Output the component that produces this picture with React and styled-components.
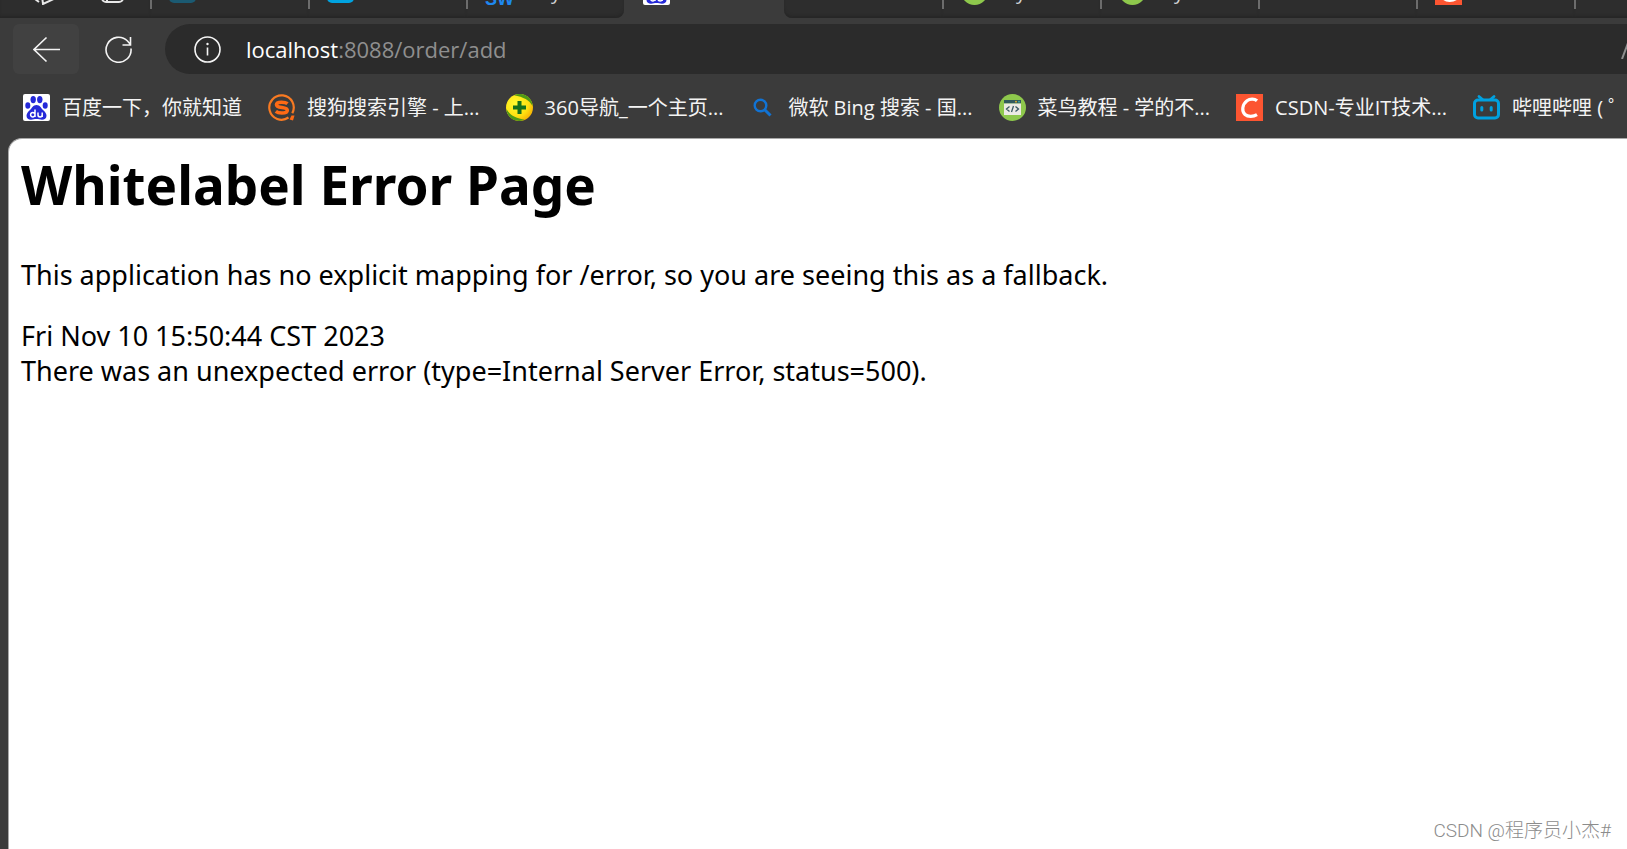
import React from 'react';
import styled, {createGlobalStyle, css} from 'styled-components';

const GlobalStyle = createGlobalStyle`
    * {
        box-sizing: border-box;
    }

    body {
        margin: 0;
        background: #3b3b3b;
        font-family: "Open Sans", "Noto Sans CJK SC", sans-serif;
    }
`;

const Browser = styled.div`
    display: flex;
    flex-direction: column;
    height: 100vh;
    overflow: hidden;
`;

const TabStrip = styled.nav`
    display: flex;
    align-items: flex-end;
    flex: none;
    height: 18px;
    overflow: hidden;
    background: #3b3b3b;
`;

const darkTab = css`
    background: #2d2d2d;
    box-shadow: inset 0 -3px 3px -1px #262626;
`;

const TabActions = styled.div`
    display: flex;
    align-items: center;
    flex: none;
    gap: 40px;
    width: 150px;
    height: 53px;
    padding-left: 34px;
    ${darkTab}
`;

const IconButton = styled.button`
    display: flex;
    padding: 0;
    border: 0;
    background: none;
    color: #e8e8e8;
`;

const Tab = styled.a`
    display: flex;
    align-items: center;
    flex: none;
    gap: 10px;
    width: ${({$active}) => ($active ? '160px' : '158px')};
    height: 53px;
    color: #d0d0d0;
    font-size: 20px;
    line-height: 28px;
    text-decoration: none;
    ${({$active}) => !$active && darkTab}
    border-radius: ${({$round}) => $round || '0'};

    &::before {
        content: "";
        width: 2px;
        height: 34px;
        margin-right: 7px;
        background: ${({$line}) => ($line ? '#6c6c6c' : 'transparent')};
    }
`;

const SwMark = styled.span`
    align-self: flex-end;
    width: 38px;
    margin-bottom: 9px;
    color: #1e88f0;
    font-family: "Liberation Sans Narrow", "Liberation Sans", sans-serif;
    font-size: 18px;
    font-weight: 700;
    line-height: 20px;
`;

const Toolbar = styled.header`
    display: flex;
    align-items: center;
    flex: none;
    height: 62px;
    padding-left: 13px;
`;

const NavButton = styled.button`
    display: flex;
    align-items: center;
    justify-content: center;
    width: 66px;
    height: 50px;
    margin-right: 6px;
    padding: 0;
    border: 0;
    border-radius: 6px;
    background: ${({$raised}) => ($raised ? '#414141' : 'none')};
    color: #f4f4f4;
`;

const AddressBar = styled.div`
    display: flex;
    align-items: center;
    flex: 1;
    gap: 25px;
    height: 50px;
    margin-left: 8px;
    padding-left: 29px;
    border-radius: 25px 0 0 25px;
    background: #2b2b2b;
    color: #f4f4f4;
    overflow: hidden;
`;

const Address = styled.a`
    flex: 1;
    color: #8f8f8f;
    font-size: 22px;
    text-decoration: none;

    b {
        color: #ffffff;
        font-weight: 400;
    }
`;

const Bookmarks = styled.nav`
    display: flex;
    align-items: center;
    flex: none;
    gap: 26px;
    height: 58px;
    padding: 0 0 3px 23px;
    overflow: hidden;
`;

const Bookmark = styled.a`
    display: flex;
    align-items: center;
    flex: none;
    gap: 12px;
    color: #f4f4f4;
    font-size: 20px;
    line-height: 28px;
    text-decoration: none;
    white-space: nowrap;
`;

const Page = styled.main`
    display: flex;
    flex-direction: column;
    flex: 1;
    margin-left: 8px;
    padding: 11px 12px 0;
    border: 1px solid #a8a8a8;
    border-width: 1px 0 0 1px;
    border-radius: 14px 0 0 0;
    background: #ffffff;
    color: #000000;
    font-family: "Noto Sans", sans-serif;
    font-size: 27px;
    line-height: 35px;
`;

const Title = styled.h1`
    margin: 0 0 37px;
    font-size: 53px;
    line-height: 70px;
`;

const Message = styled.p`
    margin: 0 0 26px;
`;

const Watermark = styled.footer`
    margin-top: auto;
    padding: 0 4px 5px;
    color: #8c8c8c;
    font-family: Roboto, "Noto Sans CJK SC", sans-serif;
    font-size: 19px;
    font-weight: 300;
    line-height: 26px;
    text-align: right;
`;

const Svg = ({children}) => (
    <svg width="27" height="27" viewBox="0 0 27 27" fill="none" aria-hidden="true">{children}</svg>
);

const BaiduIcon = () => (
    <Svg>
        <rect width="27" height="27" rx="2" fill="#fff"/>
        <g fill="#2529d8">
            <ellipse cx="4.8" cy="11.5" rx="2.5" ry="3.3"/>
            <ellipse cx="10.2" cy="5.6" rx="2.7" ry="3.6"/>
            <ellipse cx="16.8" cy="5.6" rx="2.7" ry="3.6"/>
            <ellipse cx="22.2" cy="11.5" rx="2.5" ry="3.3"/>
            <path d="M13.5 11c-3.500 0-4.500 3-6.500 5-2 1.800-3.500 3.500-3.500 5.800 0 2.600 2 4 4.500 4 2 0 3.500-.7 5.500-.7s3.500.7 5.500.7c2.500 0 4.500-1.400 4.500-4 0-2.300-1.500-4-3.500-5.800-2-2-3-5-6.500-5z"/>
        </g>
        <path d="M12 15.500v7.500M12 20.700a2.200 2.200 0 1 1-4.400 0a2.200 2.200 0 1 1 4.400 0M15 18.500v2.500c0 2.500 4.200 2.500 4.200 0v-2.500M19.200 18.500v4.500" stroke="#fff" strokeWidth="1.500"/>
    </Svg>
);

const SogouIcon = () => (
    <Svg>
        <path d="M20.500 23.500a12.200 12.200 0 1 1 3.800-4.300" stroke="#f87a22" strokeWidth="2.200"/>
        <path d="M19.500 9.600c-1.500-1.200-3.500-1.400-6-1.400-3 0-5 .8-5 2.500 0 4 10.800 1.500 10.800 5.500 0 2-2.500 2.800-5.500 2.800-2.500 0-4.500-.4-6-1.600" stroke="#ff6a14" strokeWidth="3.600"/>
        <path d="M23.500 21.500l3 0-1.500 5-3.500-1z" fill="#ff6a14"/>
    </Svg>
);

const NavIcon = () => (
    <Svg>
        <defs>
            <radialGradient id="ball" cx=".35" cy=".35" r=".8">
                <stop offset="0" stopColor="#fffb30"/>
                <stop offset=".6" stopColor="#ffe010"/>
                <stop offset="1" stopColor="#f2a200"/>
            </radialGradient>
        </defs>
        <circle cx="13.500" cy="13.500" r="13.500" fill="url(#ball)"/>
        <path d="M8 1.200C14-1.200 22 0 25.500 7.500c.8 1.800 1 3 1 4.500-3-6-9-9-18.500-10.800z" fill="#4f9a16"/>
        <path d="M19 25.800C13 28.200 5 27 1.500 19.500c-.8-1.800-1-3-1-4.500 3 6 9 9 18.500 10.800z" fill="#4f9a16"/>
        <path d="M13.500 7v13M7 13.500h13" stroke="#15701b" strokeWidth="4"/>
    </Svg>
);

const BingIcon = () => (
    <Svg>
        <circle cx="11.500" cy="11.500" r="5.800" stroke="#1173d4" strokeWidth="2.400"/>
        <path d="M15.500 15.500l6 6" stroke="#1173d4" strokeWidth="3"/>
    </Svg>
);

const RunoobIcon = () => (
    <Svg>
        <circle cx="13.500" cy="13.500" r="13.500" fill="#8ec84c"/>
        <path d="M5 6h17v3.500H5z" fill="#31595c"/>
        <path d="M5 9.500h17v11.500H5z" fill="#eceae4"/>
        <path d="M10.500 12.500l-3 2.500 3 2.500M16.500 12.500l3 2.500-3 2.500M14.500 12l-2 6" stroke="#3c5a64" strokeWidth="1.300"/>
        <circle cx="17" cy="7.700" r=".9" fill="#f0b429"/>
        <circle cx="20" cy="7.700" r=".9" fill="#3fb0a8"/>
    </Svg>
);

const CsdnIcon = () => (
    <Svg>
        <rect width="27" height="27" fill="#fc5531"/>
        <path d="M21 6.800c-2.500-2.200-7-2.300-10 0-5 3.800-5.500 10.500-2 13.700 3 2.700 8.500 2.300 12 .2" stroke="#fff" strokeWidth="3.200"/>
    </Svg>
);

const BiliIcon = () => (
    <Svg>
        <rect x="1.500" y="6" width="24" height="18" rx="3.500" stroke="#00a1e0" strokeWidth="3"/>
        <path d="M6 2.500l3.500 3M21 2.500l-3.500 3" stroke="#00a1e0" strokeWidth="2.800" strokeLinecap="round"/>
        <path d="M8.800 13.500v2.500M18.200 13.500v2.500" stroke="#00a1e0" strokeWidth="3" strokeLinecap="round"/>
    </Svg>
);

const BlockIcon = ({color}) => (
    <Svg><rect y="-2" width="27" height="27" rx="5" fill={color}/></Svg>
);

const LeafIcon = () => (
    <Svg><circle cx="13.500" cy="13.500" r="13.500" fill="#8ec84c"/></Svg>
);

const tabs = [
    {icon: <BlockIcon color="#1b5a72"/>, line: true},
    {icon: <BlockIcon color="#00a3e0"/>, line: true},
    {icon: <SwMark>SW</SwMark>, text: 'My', line: true, round: '0 0 8px 0'},
    {icon: <BaiduIcon/>, active: true},
    {round: '0 0 0 8px'},
    {icon: <LeafIcon/>, text: 'My', line: true},
    {icon: <LeafIcon/>, text: 'My', line: true},
    {line: true},
    {icon: <CsdnIcon/>, line: true},
    {line: true},
];

const bookmarks = [
    {icon: <BaiduIcon/>, text: '百度一下，你就知道'},
    {icon: <SogouIcon/>, text: '搜狗搜索引擎 - 上...'},
    {icon: <NavIcon/>, text: '360导航_一个主页...'},
    {icon: <BingIcon/>, text: '微软 Bing 搜索 - 国...'},
    {icon: <RunoobIcon/>, text: '菜鸟教程 - 学的不...'},
    {icon: <CsdnIcon/>, text: 'CSDN-专业IT技术...'},
    {icon: <BiliIcon/>, text: '哔哩哔哩 ( ゜-゜)つロ'},
];

export default function App() {
    return (
        <Browser>
            <GlobalStyle/>
            <TabStrip>
                <TabActions>
                    <IconButton aria-label="Workspaces">
                        <Svg>
                            <path d="M1 21l4 3M8 18l1 8 15-7" stroke="currentColor" strokeWidth="2"/>
                        </Svg>
                    </IconButton>
                    <IconButton aria-label="Tab actions">
                        <Svg>
                            <rect x="1" y="3" width="21" height="21" rx="4" stroke="currentColor" strokeWidth="2"/>
                            <path d="M6 8v16" stroke="currentColor" strokeWidth="2"/>
                        </Svg>
                    </IconButton>
                </TabActions>
                {tabs.map((tab, i) => (
                    <Tab key={i} href="#" $active={tab.active} $line={tab.line} $round={tab.round}>
                        {tab.icon}
                        {tab.text}
                    </Tab>
                ))}
            </TabStrip>
            <Toolbar>
                <NavButton $raised aria-label="Back">
                    <Svg>
                        <path d="M27 13.500H1M13.500 1.500l-12.500 12 12.500 12" stroke="currentColor" strokeWidth="1.600"/>
                    </Svg>
                </NavButton>
                <NavButton aria-label="Refresh">
                    <Svg>
                        <path d="M26 12.500a12.500 12.500 0 1 1-3.500-7.500l3 3.500M25.500 1v8h-8" stroke="currentColor" strokeWidth="1.600"/>
                    </Svg>
                </NavButton>
                <AddressBar>
                    <Svg>
                        <circle cx="13.500" cy="13.500" r="12.500" stroke="currentColor" strokeWidth="1.600"/>
                        <path d="M13.500 11.500v8" stroke="currentColor" strokeWidth="1.600"/>
                        <circle cx="13.500" cy="8" r="1.200" fill="currentColor"/>
                    </Svg>
                    <Address href="#"><b>localhost</b>:8088/order/add</Address>
                    <svg width="6" height="20" viewBox="0 0 6 20" fill="none" aria-hidden="true">
                        <path d="M1 20L7 4" stroke="#8f8f8f" strokeWidth="2"/>
                    </svg>
                </AddressBar>
            </Toolbar>
            <Bookmarks>
                {bookmarks.map(({icon, text}) => (
                    <Bookmark key={text} href="#">{icon}{text}</Bookmark>
                ))}
            </Bookmarks>
            <Page>
                <Title>Whitelabel Error Page</Title>
                <Message>This application has no explicit mapping for /error, so you are seeing this as a fallback.</Message>
                <div>Fri Nov 10 15:50:44 CST 2023</div>
                <div>There was an unexpected error (type=Internal Server Error, status=500).</div>
                <Watermark>CSDN @程序员小杰#</Watermark>
            </Page>
        </Browser>
    );
}
